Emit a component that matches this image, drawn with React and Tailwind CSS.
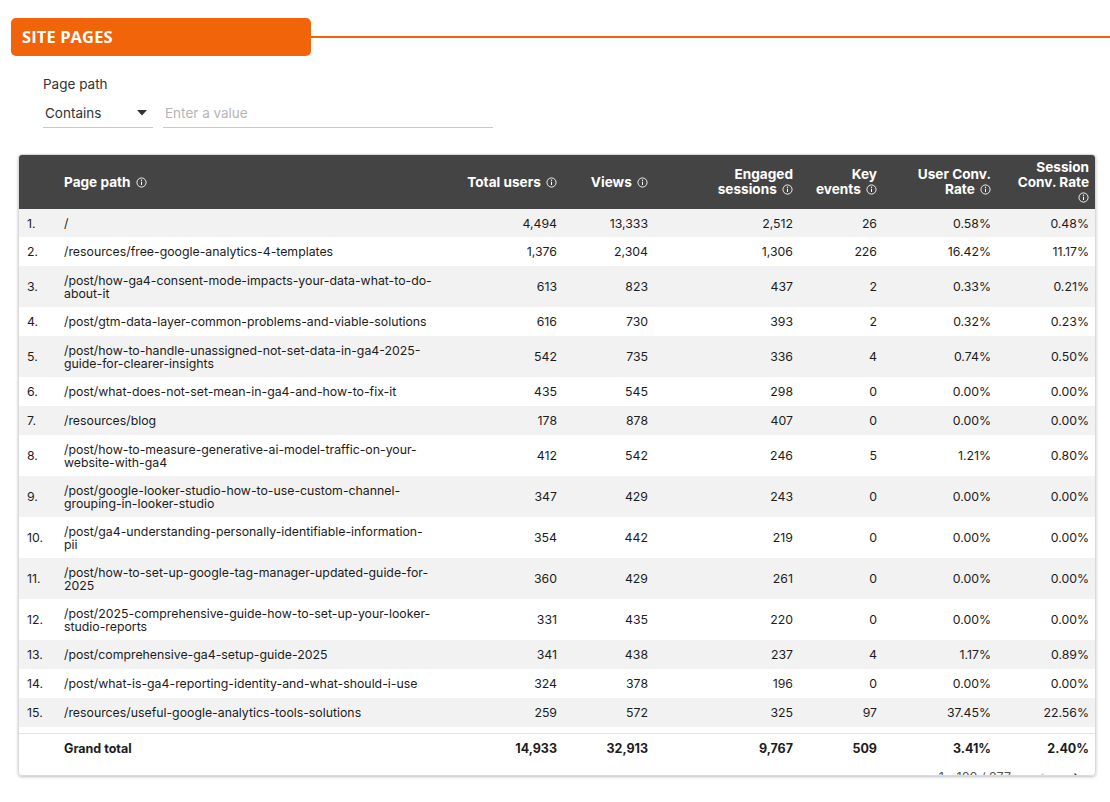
import { ChevronLeft, ChevronRight } from "lucide-react";

const rows = [
  { path: ["/"], users: "4,494", views: "13,333", engaged: "2,512", key: "26", ucr: "0.58%", scr: "0.48%" },
  { path: ["/resources/free-google-analytics-4-templates"], users: "1,376", views: "2,304", engaged: "1,306", key: "226", ucr: "16.42%", scr: "11.17%" },
  { path: ["/post/how-ga4-consent-mode-impacts-your-data-what-to-do-", "about-it"], users: "613", views: "823", engaged: "437", key: "2", ucr: "0.33%", scr: "0.21%" },
  { path: ["/post/gtm-data-layer-common-problems-and-viable-solutions"], users: "616", views: "730", engaged: "393", key: "2", ucr: "0.32%", scr: "0.23%" },
  { path: ["/post/how-to-handle-unassigned-not-set-data-in-ga4-2025-", "guide-for-clearer-insights"], users: "542", views: "735", engaged: "336", key: "4", ucr: "0.74%", scr: "0.50%" },
  { path: ["/post/what-does-not-set-mean-in-ga4-and-how-to-fix-it"], users: "435", views: "545", engaged: "298", key: "0", ucr: "0.00%", scr: "0.00%" },
  { path: ["/resources/blog"], users: "178", views: "878", engaged: "407", key: "0", ucr: "0.00%", scr: "0.00%" },
  { path: ["/post/how-to-measure-generative-ai-model-traffic-on-your-", "website-with-ga4"], users: "412", views: "542", engaged: "246", key: "5", ucr: "1.21%", scr: "0.80%" },
  { path: ["/post/google-looker-studio-how-to-use-custom-channel-", "grouping-in-looker-studio"], users: "347", views: "429", engaged: "243", key: "0", ucr: "0.00%", scr: "0.00%" },
  { path: ["/post/ga4-understanding-personally-identifiable-information-", "pii"], users: "354", views: "442", engaged: "219", key: "0", ucr: "0.00%", scr: "0.00%" },
  { path: ["/post/how-to-set-up-google-tag-manager-updated-guide-for-", "2025"], users: "360", views: "429", engaged: "261", key: "0", ucr: "0.00%", scr: "0.00%" },
  { path: ["/post/2025-comprehensive-guide-how-to-set-up-your-looker-", "studio-reports"], users: "331", views: "435", engaged: "220", key: "0", ucr: "0.00%", scr: "0.00%" },
  { path: ["/post/comprehensive-ga4-setup-guide-2025"], users: "341", views: "438", engaged: "237", key: "4", ucr: "1.17%", scr: "0.89%" },
  { path: ["/post/what-is-ga4-reporting-identity-and-what-should-i-use"], users: "324", views: "378", engaged: "196", key: "0", ucr: "0.00%", scr: "0.00%" },
  { path: ["/resources/useful-google-analytics-tools-solutions"], users: "259", views: "572", engaged: "325", key: "97", ucr: "37.45%", scr: "22.56%" },
];

function Info() {
  return (
    <svg width="11" height="11" viewBox="0 0 12 12" className="inline-block align-[-1px] ml-[2px]" fill="none">
      <circle cx="6" cy="6" r="5" stroke="white" strokeWidth="1" />
      <circle cx="6" cy="3.6" r="0.75" fill="white" />
      <path d="M6 5.3v3.5" stroke="white" strokeWidth="1.1" />
    </svg>
  );
}

const cols = "grid grid-cols-[37px_393px_116px_91px_145px_84px_114px_98px]";

export default function App() {
  return (
    <div className="w-[1110px] h-[802px] bg-white overflow-hidden text-[#1c1c1c]" style={{ fontFamily: "Inter, 'Open Sans', sans-serif" }}>
      {/* section tab */}
      <div className="flex items-center pt-[18px]">
        <div className="ml-[11px] w-[300px] h-[38px] rounded-[5px] bg-[#f2640a] flex items-center pl-[11px]">
          <span className="text-white font-bold text-[16.5px] tracking-[0.1px]" style={{ fontFamily: "'Open Sans', sans-serif" }}>SITE PAGES</span>
        </div>
        <div className="flex-1 h-[2px] bg-[#f2640a]" />
      </div>

      {/* filter */}
      <div className="pl-[43px] pt-[20px]">
        <div className="text-[13.5px] text-[#333] leading-[16px]">Page path</div>
        <div className="flex gap-[10px] mt-[13px]">
          <div className="w-[110px] pb-[6px] border-b border-[#c8c8c8] flex items-center justify-between pl-[2px] pr-[6px]">
            <span className="text-[13.5px] text-[#333] leading-[16px]">Contains</span>
            <svg width="10" height="6" viewBox="0 0 10 6"><path d="M0 0h10L5 5.5z" fill="#333" /></svg>
          </div>
          <div className="w-[330px] pb-[6px] border-b border-[#c8c8c8] pl-[2px] flex items-center">
            <span className="text-[13.5px] text-[#b5b5b5] leading-[16px]">Enter a value</span>
          </div>
        </div>
      </div>

      {/* table card */}
      <div className="ml-[18px] mt-[26px] w-[1078px] h-[622px] rounded-[4px] border border-[#dadada] shadow-[0_1px_3px_rgba(0,0,0,0.25)] overflow-hidden text-[12.3px]">
        <div className={`${cols} h-[54px] bg-[#444444] text-white font-bold text-[13.6px] leading-[15px] items-center`}>
          <div />
          <div className="pl-2">Page path <Info /></div>
          <div className="text-right pr-2">Total users <Info /></div>
          <div className="text-right pr-2">Views <Info /></div>
          <div className="text-right pr-2">Engaged<br />sessions <Info /></div>
          <div className="text-right pr-2">Key<br />events <Info /></div>
          <div className="text-right pr-2">User Conv.<br />Rate <Info /></div>
          <div className="text-right pr-2">Session<br />Conv. Rate<br /><Info /></div>
        </div>

        {rows.map((r, i) => (
          <div key={i} className={`${cols} ${i % 2 === 0 ? "bg-[#f2f2f2]" : "bg-white"} ${i === 0 ? "h-[28px]" : r.path.length > 1 ? "h-[41px]" : "h-[29px]"} items-center leading-[13px]`}>
            <div className="pl-2">{i + 1}.</div>
            <div className="pl-2 whitespace-nowrap">
              {r.path.map((p, j) => (
                <div key={j}>{p}</div>
              ))}
            </div>
            <div className="text-right pr-2">{r.users}</div>
            <div className="text-right pr-2">{r.views}</div>
            <div className="text-right pr-2">{r.engaged}</div>
            <div className="text-right pr-2">{r.key}</div>
            <div className="text-right pr-2">{r.ucr}</div>
            <div className="text-right pr-2">{r.scr}</div>
          </div>
        ))}

        <div className={`${cols} mt-[6px] h-[31px] border-t border-[#e4e4e4] items-center font-bold text-[12.5px] pt-[1px]`}>
          <div />
          <div className="pl-2">Grand total</div>
          <div className="text-right pr-2">14,933</div>
          <div className="text-right pr-2">32,913</div>
          <div className="text-right pr-2">9,767</div>
          <div className="text-right pr-2">509</div>
          <div className="text-right pr-2">3.41%</div>
          <div className="text-right pr-2">2.40%</div>
        </div>

        <div className="flex items-center justify-end h-[20px] pr-[10px] mt-[4px] text-[12.5px] text-[#555]">
          <span className="mr-[22px]">1 - 100 / 277</span>
          <ChevronLeft className="w-[16px] h-[16px] text-[#c4c4c4] mr-[20px]" />
          <ChevronRight className="w-[16px] h-[16px] text-[#333]" />
        </div>
      </div>
    </div>
  );
}
